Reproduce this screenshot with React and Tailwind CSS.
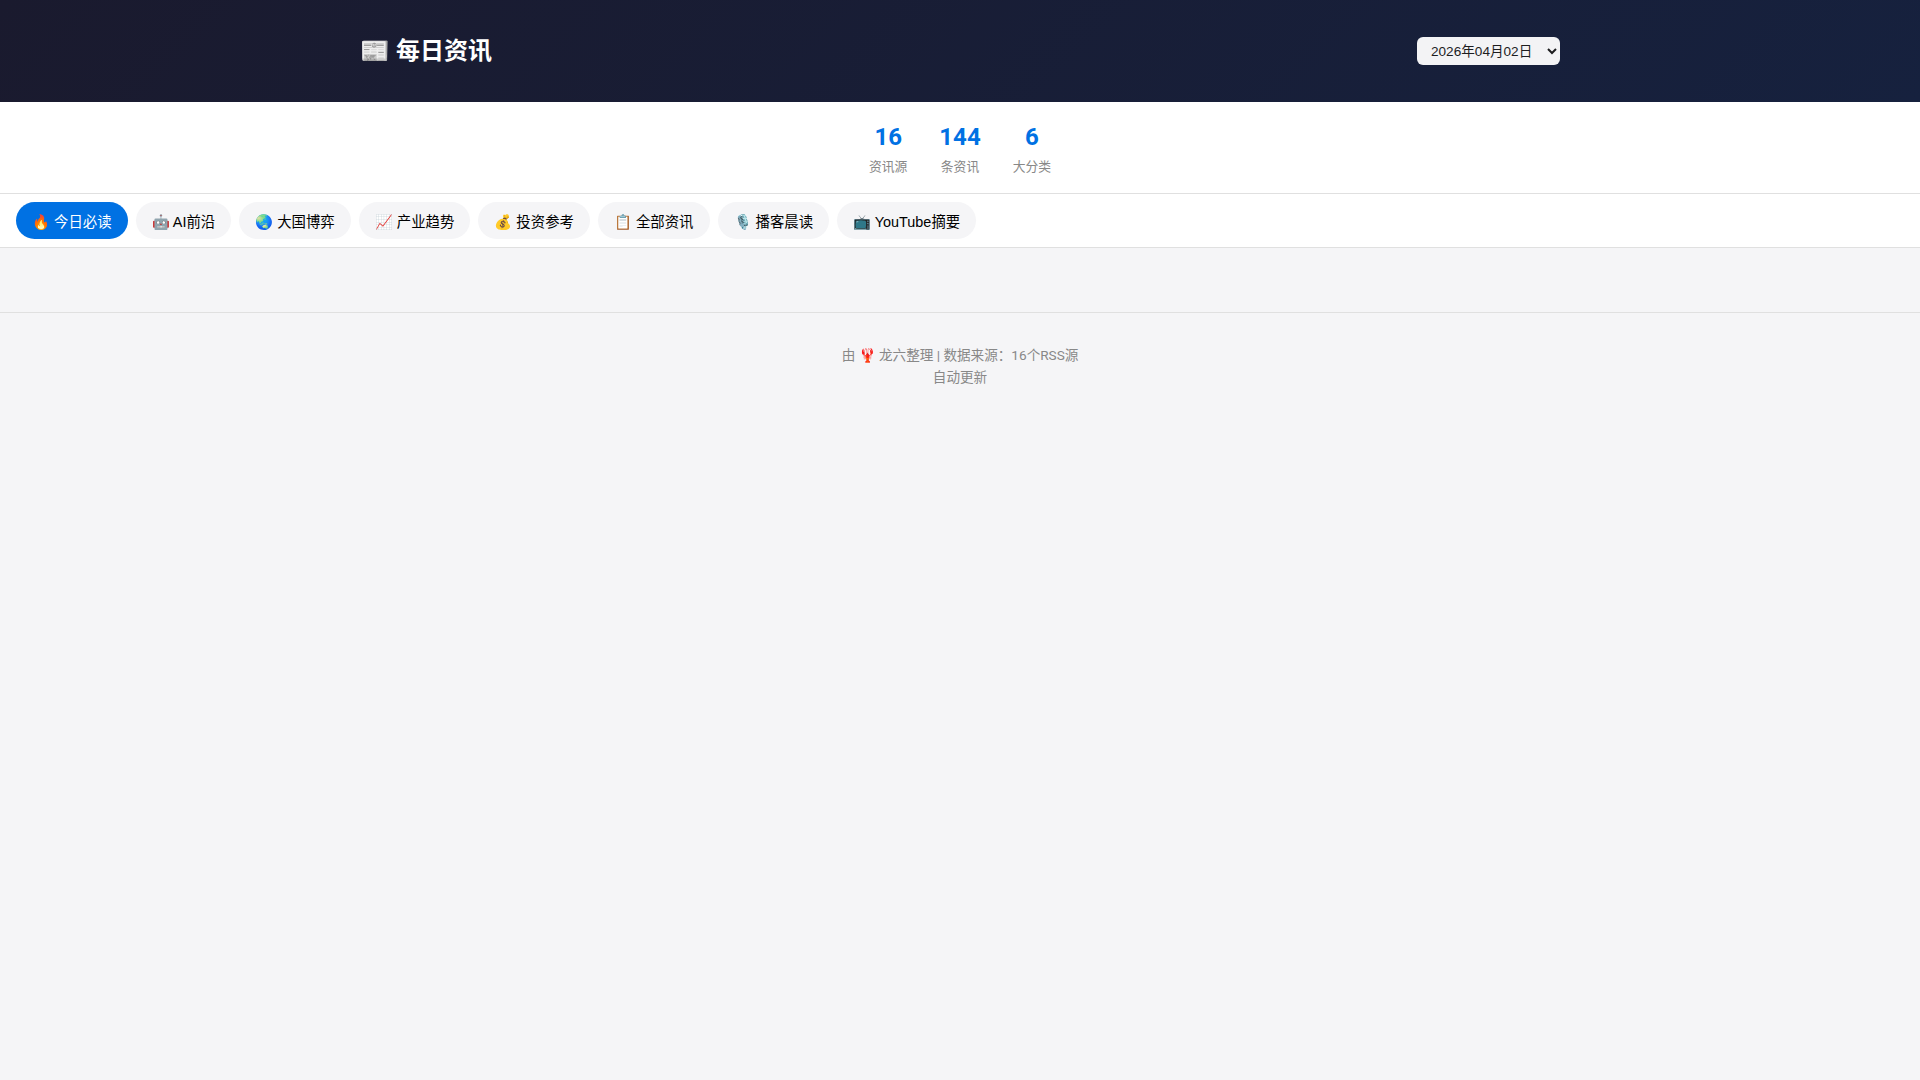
const tabs = [
  ["🔥", "今日必读"], ["🤖", "AI前沿"], ["🌏", "大国博弈"], ["📈", "产业趋势"],
  ["💰", "投资参考"], ["📋", "全部资讯"], ["🎙️", "播客晨读"], ["📺", "YouTube摘要"],
];
const stats = [["16", "资讯源"], ["144", "条资讯"], ["6", "大分类"]];

export default function App() {
  return (
    <div lang="zh-CN" className="min-h-screen bg-[#f5f5f7] font-[Roboto,'Noto_Sans_CJK_SC',sans-serif] text-base leading-[1.6] text-[#1d1d1f]">
      <header className="bg-[linear-gradient(135deg,#1a1a2e,#16213e)] px-5 py-[30px] text-white">
        <div className="mx-auto flex h-[42px] max-w-[1200px] items-center justify-between">
          <h1 className="text-2xl leading-[1.6] font-bold">📰 每日资讯</h1>
          <select className="h-7 w-[143px] rounded-md bg-white/95 px-2.5 font-['Liberation_Sans','Noto_Sans_CJK_SC',sans-serif] text-[13.6px] leading-normal text-[#1d1d1f]">
            <option>2026年04月02日</option>
          </select>
        </div>
      </header>
      <section className="flex h-[92px] justify-center gap-8 border-b border-[#e0e0e0] bg-white pt-4">
        {stats.map(([n, label]) => (
          <div key={label} className="text-center">
            <div className="text-2xl leading-[1.6] font-bold text-[#0071e3]">{n}</div>
            <div className="pt-px text-[12.8px] text-[#888]">{label}</div>
          </div>
        ))}
      </section>
      <nav className="flex h-[54px] items-center gap-2 border-b border-[#e0e0e0] bg-white px-4">
        {tabs.map(([icon, label], i) => (
          <button key={label} className={`h-[37px] rounded-full px-4 pt-1 font-['Liberation_Sans','Noto_Sans_CJK_SC',sans-serif] text-[14.4px] leading-normal whitespace-nowrap ${i === 0 ? "bg-[#0071e3] text-white" : "bg-[#f5f5f7] text-black"}`}>
            {icon} {label}
          </button>
        ))}
      </nav>
      <main className="h-16" />
      <footer className="border-t border-[#e0e0e0] px-4 py-8 text-center text-[13.6px] leading-[1.6] text-[#888]">
        <p>由 🦞 龙六整理 | 数据来源：16个RSS源</p>
        <p>自动更新</p>
      </footer>
    </div>
  );
}
